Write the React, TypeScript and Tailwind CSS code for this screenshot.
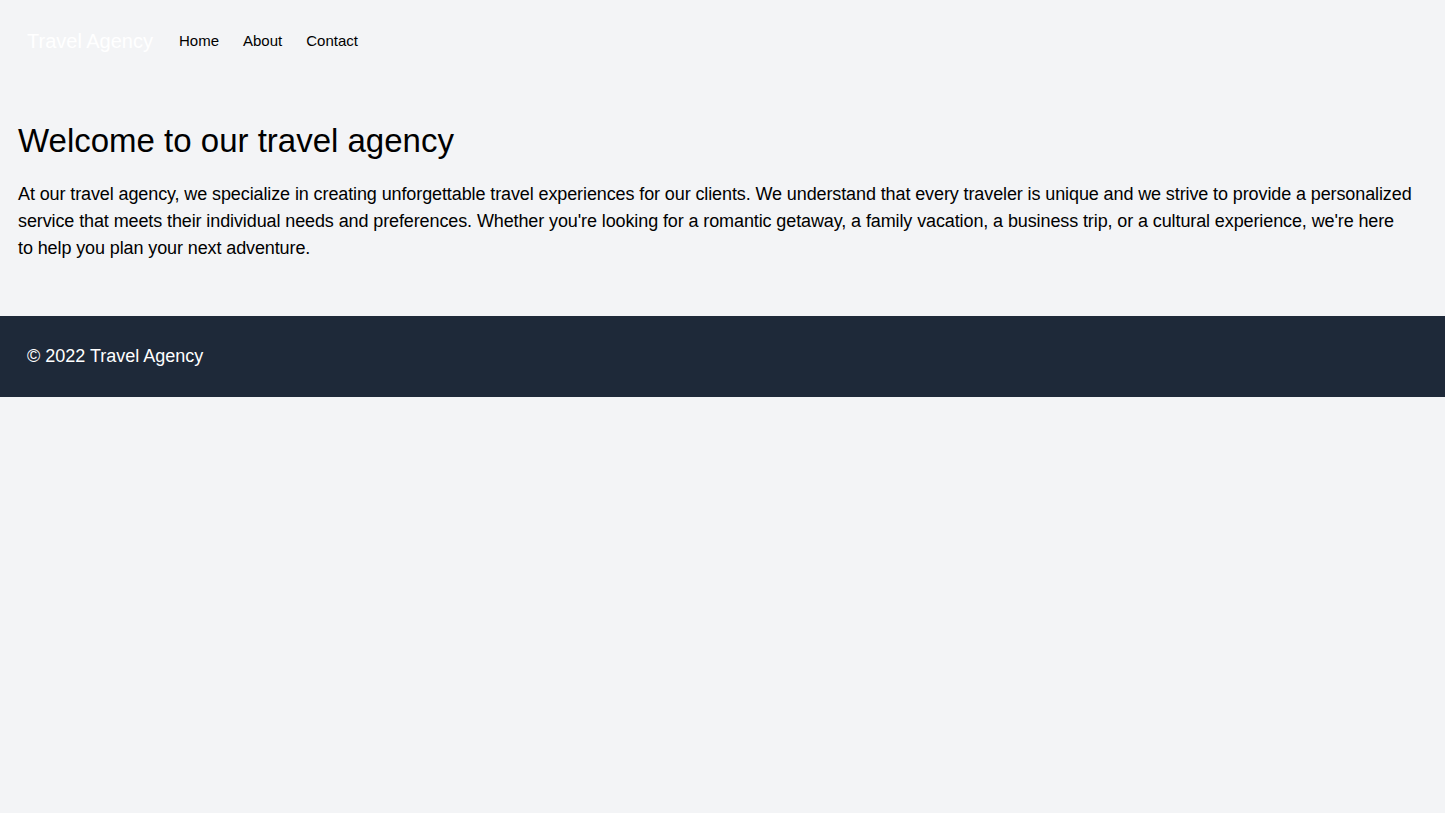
export default function App() {
  return (
    <div className="min-h-screen bg-gray-100 flex flex-col font-['Liberation_Sans',Arial,sans-serif]">
      {/* Nav */}
      <nav className="flex items-center px-[27px] py-[27px]">
        <span className="text-xl text-white">Travel Agency</span>
        <div className="flex items-center gap-6 ml-[26px] text-[15px] text-black">
          <a href="#">Home</a>
          <a href="#">About</a>
          <a href="#">Contact</a>
        </div>
      </nav>

      {/* Intro */}
      <main className="pl-[18px] pr-[32px] pt-[39px] pb-[54px]">
        <h1 className="text-[33px] leading-10 text-black mb-5">Welcome to our travel agency</h1>
        <p className="text-lg leading-[27px] tracking-[-0.006em] text-black">
          At our travel agency, we specialize in creating unforgettable travel experiences for our clients. We
          understand that every traveler is unique and we strive to provide a personalized service that meets their
          individual needs and preferences. Whether you're looking for a romantic getaway, a family vacation, a
          business trip, or a cultural experience, we're here to help you plan your next adventure.
        </p>
      </main>

      {/* Footer */}
      <footer className="bg-gray-800 text-white px-[27px] pt-[26px] pb-[27px]">
        <p className="text-lg">© 2022 Travel Agency</p>
      </footer>
    </div>
  );
}
